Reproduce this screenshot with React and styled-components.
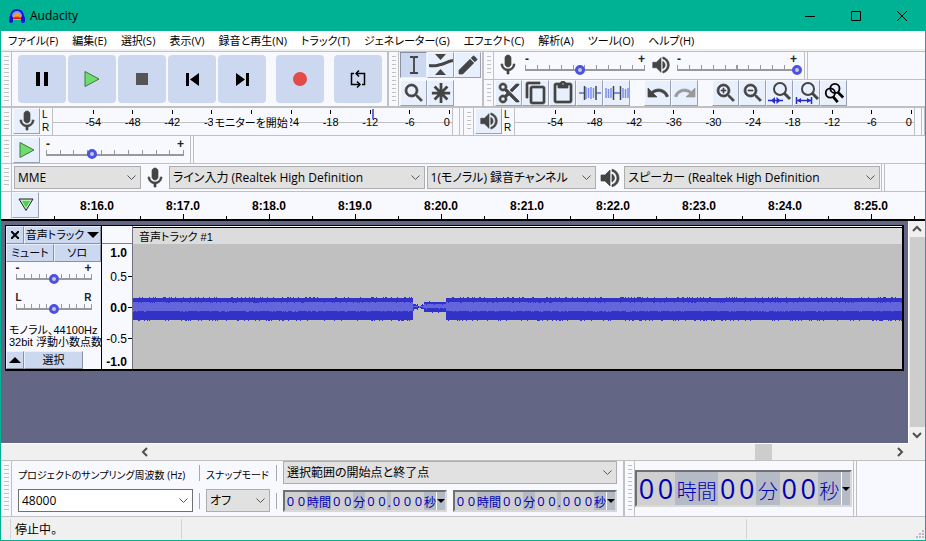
import React from 'react';
import styled, { createGlobalStyle } from 'styled-components';
import {
  MdContentCopy,
  MdContentCut,
  MdContentPaste,
  MdEdit,
  MdMic,
  MdRedo,
  MdSearch,
  MdUndo,
  MdVolumeUp,
  MdZoomIn,
  MdZoomOut,
} from 'react-icons/md';

const LINE = '#c0c0c0';
const PANEL = '#f8f9ff';
const BUTTON = '#ccd8f0';
const INK = '#444444';

const GlobalStyle = createGlobalStyle`
  * {
    box-sizing: border-box;
  }

  body {
    margin: 0;
    font-family: 'Open Sans', 'Noto Sans CJK JP', sans-serif;
    font-size: 12px;
    line-height: 16px;
    font-feature-settings: 'palt';
    color: #000;
  }

  button, input, select {
    margin: 0;
    padding: 0;
    border: 0;
    border-radius: 0;
    font: inherit;
    font-feature-settings: inherit;
    color: inherit;
  }

  svg {
    display: block;
    flex: none;
  }

  /* thicken the icon package's glyphs */
  svg[stroke-width='0'] path:not([fill='none']) {
    stroke-width: 0.7;
  }
`;

const Window = styled.div`
  display: flex;
  flex-direction: column;
  min-height: 100vh;
  border: 1px solid #00b294;
  background: ${PANEL};
`;

const TitleBar = styled.header`
  display: flex;
  align-items: center;
  height: 30px;
  padding-left: 8px;
  background: #00b294;
`;

const Title = styled.h1`
  flex: 1;
  margin: 0 0 0 5px;
  font-size: 12px;
  font-weight: 400;
`;

const CaptionButton = styled.button`
  display: flex;
  align-items: center;
  justify-content: center;
  width: 46px;
  height: 30px;
  background: none;
`;

const MenuBar = styled.nav`
  display: flex;
  gap: 14px;
  height: 20px;
  padding: 2px 7px 0;
  background: #fff;
  border-bottom: 2px solid #f0f0f0;
  font-size: 11px;
`;

const MenuLink = styled.a`
  color: #000;
  text-decoration: none;
  white-space: nowrap;
`;

const Dock = styled.div`
  display: flex;
  height: ${(p) => p.$height}px;
  border-top: ${(p) => p.$line || 1}px solid ${LINE};
`;

const Grabber = styled.div`
  flex: none;
  width: ${(p) => (p.$first ? 11 : 10)}px;
  padding: 4px 2px 4px 3px;
  border-right: 1px solid ${LINE};

  &::before {
    content: '';
    display: block;
    height: 100%;
    background: ${(p) => (p.$blank ? 'none' : `repeating-linear-gradient(${LINE} 0 1px, transparent 1px 4px)`)};
  }
`;

const Divider = styled.div`
  flex: none;
  width: ${(p) => p.$width || 4}px;
  border-left: 1px solid ${LINE};
  border-right: 1px solid ${LINE};
`;

const Transport = styled.div`
  display: flex;
  align-items: center;
  gap: 2px;
  padding: 0 5px 0 6px;
`;

const TransportButton = styled.button`
  display: flex;
  align-items: center;
  justify-content: center;
  width: 48px;
  height: 48px;
  margin-left: ${(p) => (p.$apart ? 8 : 0)}px;
  border-radius: 4px;
  background: ${BUTTON};
`;

const ToolGrid = styled.div`
  display: grid;
  grid-template-columns: repeat(3, 27px);
  grid-template-rows: 27px 26px;
  row-gap: 1px;
  padding: 0 1px;
`;

const ToolButton = styled.button`
  display: flex;
  flex: none;
  align-items: center;
  justify-content: center;
  width: 27px;
  height: 26px;
  color: ${(p) => (p.disabled ? '#999' : INK)};
  background: ${(p) => (p.$active ? BUTTON : '#e9f0fd')};
  border: 1px solid;
  border-color: ${(p) => (p.$active ? '#8890a4 #e9f0fd #e9f0fd #8890a4' : '#f8f9ff #9aa0b0 #9aa0b0 #f8f9ff')};
`;

const Stack = styled.div`
  display: flex;
  flex: 1;
  flex-direction: column;
  min-width: 0;
`;

const StackRow = styled.div`
  display: flex;
  flex: 1;
  align-items: stretch;

  & + & {
    border-top: 1px solid ${LINE};
  }
`;

const MixerGroup = styled.div`
  display: flex;
  align-items: center;
  gap: ${(p) => (p.$tight ? 1 : 0)}px;
  padding: 0 ${(p) => (p.$tight ? 1 : 2)}px;
  color: ${INK};
`;

const ButtonGroup = styled.div`
  display: flex;
  margin-right: 13px;
  padding-left: 1px;
`;

const SliderBox = styled.div`
  display: flex;
  flex: none;
  flex-direction: column;
  width: ${(p) => p.$width}px;
`;

const SliderEnds = styled.div`
  display: flex;
  justify-content: space-between;
  padding: 0 5px;
  font: 700 ${(p) => (p.$letters ? 10 : 12)}px/8px 'Liberation Sans', sans-serif;
  color: #222;
`;

const Range = styled.input`
  appearance: none;
  width: 100%;
  height: 12px;
  background:
    linear-gradient(#999, #999) center 6px / calc(100% - 10px) 2px no-repeat,
    repeating-linear-gradient(90deg, #999 0 1px, transparent 1px calc((100% - 1px) / 10)) center 2px / calc(100% - 10px) 4px no-repeat;

  &::-webkit-slider-thumb {
    appearance: none;
    width: 10px;
    height: 10px;
    border: 3px solid #4b53e6;
    border-radius: 50%;
    background: #c8c8d0;
    margin-top: 1px;
  }
`;

const MeterBox = styled.div`
  display: flex;
  flex: 1;
  align-items: stretch;
  min-width: 0;
  padding-left: 1px;
`;

const Channels = styled.div`
  display: flex;
  flex: none;
  flex-direction: column;
  width: 12px;
  padding-left: 2px;
  font: 10px/13px 'Liberation Sans', sans-serif;
`;

const MeterScale = styled.div`
  position: relative;
  display: flex;
  flex: 1;
  justify-content: space-between;
  margin-right: 6px;
  padding: 2px 2px 0 0;
  border-left: 1px solid ${LINE};
  border-right: 1px solid ${LINE};
  background: linear-gradient(${LINE}, ${LINE}) 0 14px / 100% 1px no-repeat;
`;

const MeterMark = styled.span`
  display: flex;
  flex-direction: column;
  align-items: ${(p) => (p.$last ? 'flex-end' : 'center')};
  width: 1px;
  font: 11px/16px 'Liberation Sans', sans-serif;

  &::before {
    content: '';
    width: 1px;
    height: 4px;
    background: ${(p) => (p.$first ? 'none' : '#000')};
  }
`;

const MeterHint = styled.span`
  position: absolute;
  top: 6px;
  left: 40%;
  padding: 0 2px;
  background: ${PANEL};
  font-size: 11px;
  line-height: 17px;
  white-space: nowrap;
`;

const Peak = styled.span`
  position: absolute;
  top: 1px;
  left: 80%;
  width: 2px;
  height: 10px;
  background: #6a6af0;
`;

const SelectBox = styled.div`
  display: flex;
  flex: 0 1 ${(p) => p.$width}px;
  min-width: 0;
  height: 23px;
  border: 1px solid ${(p) => (p.$white ? '#707070' : '#adadad')};
  background: ${(p) => (p.$white ? '#fff' : '#e1e1e1')};

  select, input {
    flex: 1;
    min-width: 0;
    width: 100%;
    padding-left: 3px;
    appearance: none;
    background: url("data:image/svg+xml,%3Csvg xmlns='http://www.w3.org/2000/svg' width='9' height='6'%3E%3Cpath d='M.5.5l4 4 4-4' fill='none' stroke='%23555'/%3E%3C/svg%3E") right 4px center no-repeat;
    outline: none;
  }
`;

const DeviceBar = styled.div`
  display: flex;
  flex: 0 1 869px;
  align-items: center;
  min-width: 0;
  padding: 0 1px 0 2px;
  gap: 2px;
  color: ${INK};

  select {
    color: #000;
  }
`;

const Timeline = styled.div`
  display: flex;
  height: 30px;
  border-top: 1px solid ${LINE};
  border-bottom: 2px solid #000;
`;

const Ruler = styled.div`
  display: flex;
  flex: 1;
  min-width: 0;
  margin-left: 15px;
  overflow: hidden;
`;

const Second = styled.div`
  display: flex;
  flex: none;
  flex-direction: column;
  align-items: center;
  justify-content: space-between;
  width: 86px;
  padding-top: 6px;
  font: bold 12px/16px 'Liberation Sans', sans-serif;
  background: linear-gradient(#000, #000) left bottom / 1px 3px no-repeat;

  &::after {
    content: '';
    width: 1px;
    height: 5px;
    background: #000;
  }
`;

const Workspace = styled.main`
  display: grid;
  flex: 1;
  grid-template-columns: 1fr 17px;
  grid-template-rows: 1fr 17px;
  background: #f0f0f0;
`;

const TrackList = styled.div`
  min-width: 0;
  padding: 4px 4px 0 4px;
  background: #646685;
`;

const Track = styled.section`
  display: flex;
  height: 146px;
  border: 1px solid #000;
  border-width: 1px 2px 2px 1px;
  background: ${PANEL};
`;

const TrackPanel = styled.div`
  position: relative;
  z-index: 1;
  display: flex;
  flex: none;
  flex-direction: column;
  width: 96px;
  border-right: 1px solid #000;
`;

const PanelRow = styled.div`
  display: flex;
  flex: none;
  height: 18px;
`;

const PanelButton = styled.button`
  display: flex;
  flex: ${(p) => (p.$width ? `0 0 ${p.$width}px` : '1')};
  align-items: center;
  justify-content: center;
  gap: 3px;
  min-width: 0;
  background: ${BUTTON};
  border: 1px solid;
  border-color: #e9f0fd #8890a4 #8890a4 #e9f0fd;
  font-size: 11px;
  line-height: 16px;
  white-space: nowrap;
`;

const PanelSliders = styled.div`
  display: flex;
  flex: 1;
  flex-direction: column;
  align-items: center;
  gap: 10px;
  padding-top: 2px;
`;

const TrackInfo = styled.p`
  flex: none;
  margin: 0;
  padding: 0 0 3px 3px;
  font: 11px/12px 'Liberation Sans', 'Noto Sans CJK JP', sans-serif;
  font-feature-settings: 'palt';
  white-space: nowrap;
`;

const LevelRuler = styled.div`
  display: grid;
  flex: none;
  grid-template-rows: 17px 31px 31px 31px 15px;
  width: 31px;
  padding-top: 18px;
  border-right: 1px solid #707080;
  background: linear-gradient(#808080, #808080) 0 17px / 100% 1px no-repeat;
`;

const Level = styled.span`
  display: flex;
  align-items: center;
  justify-content: flex-end;
  gap: 1px;
  font: ${(p) => (p.$bold ? '700' : '400')} 12px/16px 'Liberation Sans', sans-serif;

  &::after {
    content: '';
    width: 4px;
    height: 1px;
    background: ${(p) => (p.$tick ? '#000' : 'none')};
  }
`;

const Clip = styled.div`
  display: flex;
  flex: 1;
  flex-direction: column;
  min-width: 0;
  border-top: 1px solid #fff;
  background: #c0c0c0;
`;

const ClipTitle = styled.h2`
  height: 17px;
  margin: 0;
  padding-left: 6px;
  border-top: 1px solid #000;
  background: #dcdcdc;
  font: 400 11px/18px 'Liberation Sans', 'Noto Sans CJK JP', sans-serif;
  font-feature-settings: 'palt';
`;

const Wave = styled.svg`
  width: 100%;
  height: 125px;
`;

const ScrollBar = styled.div`
  display: flex;
  flex-direction: ${(p) => (p.$vertical ? 'column' : 'row')};
  padding-left: ${(p) => (p.$vertical ? 0 : 136)}px;
  background: #f0f0f0;
  border: 0 solid #fff;
  border-width: ${(p) => (p.$vertical ? '0 0 0 1px' : '1px 0 0')};
`;

const ScrollButton = styled.button`
  display: flex;
  flex: none;
  align-items: center;
  justify-content: center;
  width: 16px;
  height: 16px;
  background: none;
`;

const ScrollTrack = styled.div`
  display: flex;
  flex: 1;
  justify-content: flex-end;
  padding-right: ${(p) => p.$after || 0}px;
`;

const ScrollThumb = styled.div`
  width: ${(p) => p.$width}px;
  background: #cdcdcd;
`;

const SelectionGrid = styled.div`
  display: grid;
  grid-template-columns: 175px 1px 64px 1px 334px;
  grid-template-rows: 23px 23px;
  align-items: center;
  gap: 5px 6px;
  padding: 0 6px;
`;

const Bar = styled.div`
  height: 16px;
  background: #a8a8a8;
`;

const FieldLabel = styled.label`
  padding-top: 4px;
  font: 10px/16px 'Open Sans', 'Noto Sans CJK JP', sans-serif;
  font-feature-settings: 'palt';
  white-space: nowrap;
`;

const TimePair = styled.div`
  display: grid;
  grid-template-columns: 1fr 1fr;
  gap: 6px;
`;

const TimeBox = styled.div`
  display: flex;
  flex: none;
  align-self: center;
  height: ${(p) => (p.$large ? 37 : 22)}px;
  border: 2px solid;
  border-color: #707070 #d8d8d8 #d8d8d8 #707070;
  background: #b4bac6;
  color: #0000b4;
  font-size: ${(p) => (p.$large ? 27 : 13)}px;
`;

const Digit = styled.input`
  width: ${(p) => (p.$large ? 19 : 11)}px;
  text-align: center;
  background: #d0d0d0;
`;

const Unit = styled.span`
  display: flex;
  flex: 1 0 auto;
  align-items: center;
  justify-content: center;
  padding-top: ${(p) => (p.$large ? 4 : 2)}px;
  font-family: 'Noto Sans CJK JP', sans-serif;
  font-weight: ${(p) => (p.$large ? 300 : 400)};
  font-size: ${(p) => (p.$large ? 20 : 12)}px;
  line-height: 16px;
  font-feature-settings: normal;
`;

const TimeMenu = styled.button`
  display: flex;
  align-items: center;
  justify-content: center;
  width: 9px;
  border-left: 1px solid #fff;
  background: #b4bac6;
  color: #000;
`;

const AudioPosition = styled.div`
  display: flex;
  width: 217px;
  margin-right: 1px;

  ${TimeBox} {
    flex: 1;
  }
`;

const StatusBar = styled.footer`
  display: flex;
  height: 24px;
  padding-left: 9px;
  border-top: 1px solid ${LINE};
  background: #f0f0f0;
`;

const StatusCell = styled.div`
  flex: ${(p) => p.$flex};
  margin: 2px 0 1px;
  padding: 3px 4px;
  border-left: 1px solid #d4d4d4;
`;

const SizeGrip = styled.svg`
  margin-left: -10px;
`;

const Logo = () => (
  <svg width="16" height="16" viewBox="0 0 16 16">
    <path d="M2 10V8a6 6 0 0 1 12 0v2" fill="#7f9ff0" stroke="#1414d8" strokeWidth="2" />
    <path d="M4 12c0-4 2-7 4-7s4 3 4 7z" fill="#ff9a1e" />
    <path d="M4 10l1-1 1 1 1-2 1 2 1-2 1 2 1-1 1 1v1H4z" fill="#e01010" />
    <rect x="0" y="8" width="4" height="7" rx="2" fill="#1414d8" />
    <rect x="12" y="8" width="4" height="7" rx="2" fill="#1414d8" />
  </svg>
);

const Glyph = ({ size = 24, children }) => (
  <svg width={size} height={size} viewBox="0 0 24 24" fill="none" stroke="currentColor" strokeWidth="2">
    {children}
  </svg>
);

const PlayIcon = () => (
  <svg width="16" height="18" viewBox="0 0 16 18">
    <path d="M1 1.5v15L15 9z" fill="#6fdc6f" stroke="#3c7a3c" />
  </svg>
);

const LoopIcon = () => (
  <Glyph>
    <path d="M8 6.500H5.500v11H14M16 17.500h2.500v-11H10" strokeWidth="1.500" stroke="#000" />
    <path d="M11 14.500l3 3-3 3M13 3.500l-3 3 3 3" strokeWidth="1.500" stroke="#000" />
  </Glyph>
);

const IBeamIcon = () => (
  <Glyph>
    <path d="M8 4h3l1 1 1-1h3M8 20h3l1-1 1 1h3M12 5v14" strokeWidth="1.8" />
  </Glyph>
);

const EnvelopeIcon = () => (
  <Glyph>
    <path d="M0 12.500c6 1 7 0 12-1s6-3 12-4" strokeWidth="3" />
    <path d="M6 1h11l-5.500 6zM6 22h11l-5.500-6z" fill="currentColor" stroke="none" />
  </Glyph>
);

const MultiIcon = () => (
  <Glyph size={22}>
    <path d="M12 1v22M2 12h20M5 5l14 14M19 5L5 19" strokeWidth="3" />
  </Glyph>
);

const TrimIcon = () => (
  <Glyph>
    <path d="M1 12h5M18 12h5" stroke="#5b6fe0" strokeWidth="1.500" />
    <path d="M8 6v12M10.500 7v10M13 6v12M15.500 7v10" stroke="#7a8df0" strokeWidth="1.500" />
    <path d="M6.500 5v14M18 5v14" strokeWidth="1.500" />
  </Glyph>
);

const SilenceIcon = () => (
  <Glyph>
    <path d="M1 7v10M3.500 8v9M6 7v10M18 7v10M20.500 8v9M23 7v10" stroke="#7a8df0" strokeWidth="1.500" />
    <path d="M8 12h8" stroke="#5b6fe0" strokeWidth="1.500" />
    <path d="M8.500 5v14M15.500 5v14" strokeWidth="1.500" />
  </Glyph>
);

const FitSelectionIcon = () => (
  <Glyph>
    <circle cx="12" cy="8" r="6" />
    <path d="M16 12l6 6" strokeWidth="3" />
    <path d="M0 19.500h15" stroke="#2a2ac8" strokeWidth="1.500" />
    <path d="M7 16v7l-4-3.500zM8.500 16v7l4-3.500z" fill="#2a2ac8" stroke="none" />
  </Glyph>
);

const FitProjectIcon = () => (
  <Glyph>
    <circle cx="13" cy="8" r="6" />
    <path d="M17 12l6 6" strokeWidth="3" />
    <path d="M2 19.500h14M1.500 16v7M16.500 16v7" stroke="#2a2ac8" strokeWidth="1.500" />
    <path d="M6 17v5l-4-2.500zM12 17v5l4-2.500z" fill="#2a2ac8" stroke="none" />
  </Glyph>
);

const ZoomToggleIcon = () => (
  <Glyph size={22}>
    <g stroke="#000">
      <path d="M16 11l6 6M11 16l5 6" strokeWidth="3" />
      <circle cx="13" cy="7" r="5" fill="#e9f0fd" />
      <circle cx="8" cy="12" r="5" />
    </g>
  </Glyph>
);

const Triangle = ({ up, width = 12 }) => (
  <svg width={width} height={width / 2} viewBox="0 0 12 6">
    <path d={up ? 'M0 6h12L6 0z' : 'M0 0h12L6 6z'} />
  </svg>
);

const Chevron = ({ turn }) => (
  <svg width="10" height="10" viewBox="0 0 10 10">
    <path d="M1 7l4-4 4 4" fill="none" stroke="#505050" strokeWidth="2" transform={`rotate(${turn} 5 5)`} />
  </svg>
);

const menus = [
  'ファイル(F)', '編集(E)', '選択(S)', '表示(V)', '録音と再生(N)', 'トラック(T)',
  'ジェネレーター(G)', 'エフェクト(C)', '解析(A)', 'ツール(O)', 'ヘルプ(H)',
];

const playLevels = ['', -54, -48, -42, -36, -30, -24, -18, -12, -6, 0];

// -30 stays blank under the hint
const recordLevels = ['', -54, -48, -42, -36, '', -24, -18, -12, -6, 0];

const seconds = [16, 17, 18, 19, 20, 21, 22, 23, 24, 25];

// One column per pixel: a dark peak band with a lighter RMS band inside it
const buildWave = () => {
  let peak = '';
  let rms = '';
  let seed = 7;
  const jitter = () => {
    seed = (seed * 16807) % 2147483647;
    return seed % 5 === 0 ? 1 : 0;
  };
  for (let x = 0; x < 770; x += 1) {
    let band = [54, 76, 58, 67];
    if (x >= 280 && x < 291) {
      const pinch = Math.round(Math.abs(x - 286) / 4);
      band = [62 - pinch, 64 + pinch, 62, 63];
    } else if (x >= 291 && x < 313) {
      band = [58, 68, 60, 64];
    }
    const [top, bottom, rmsTop, rmsBottom] = band;
    peak += `M${x} ${top - jitter()}h1V${bottom + jitter()}h-1z`;
    rms += `M${x} ${rmsTop + jitter()}h1V${rmsBottom + jitter()}h-1z`;
  }
  return { peak, rms };
};

const wave = buildWave();

const Slider = ({ label, width, value, ends = ['-', '+'] }) => (
  <SliderBox $width={width}>
    <SliderEnds $letters={ends[0] === 'L'}>
      <span>{ends[0]}</span>
      <span>{ends[1]}</span>
    </SliderEnds>
    <Range type="range" aria-label={label} defaultValue={value} />
  </SliderBox>
);

const Select = ({ label, value, width }) => (
  <SelectBox $width={width}>
    <select aria-label={label} defaultValue={value}>
      <option>{value}</option>
    </select>
  </SelectBox>
);

const Meter = ({ label, icon, levels, hint }) => (
  <MeterBox>
    <ToolButton aria-label={label}>{icon}</ToolButton>
    <Channels>
      <span>L</span>
      <span>R</span>
    </Channels>
    <MeterScale>
      {levels.map((level, i) => (
        <MeterMark key={i} $first={i === 0} $last={i === 10}>{level}</MeterMark>
      ))}
      {hint && <Peak />}
      {hint && <MeterHint>{hint}</MeterHint>}
    </MeterScale>
  </MeterBox>
);

const TimeField = ({ label, parts, large }) => (
  <TimeBox role="group" aria-label={label} $large={large}>
    {parts.map(([digits, unit], i) => (
      <React.Fragment key={i}>
        {digits.split('').map((digit, n) => (
          <Digit key={n} $large={large} maxLength={1} defaultValue={digit} aria-label={`${label} ${unit}`} />
        ))}
        <Unit $large={large}>{unit}</Unit>
      </React.Fragment>
    ))}
    <TimeMenu aria-label={`${label} 形式`}><Triangle width={8} /></TimeMenu>
  </TimeBox>
);

const selectionTime = [['00', '時間'], ['00', '分'], ['00', '.'], ['000', '秒']];

const App = () => {
  return (
    <Window>
      <GlobalStyle />
      <TitleBar>
        <Logo />
        <Title>Audacity</Title>
        <CaptionButton aria-label="最小化">
          <svg width="10" height="10"><path d="M0 5.500h10" stroke="#000" /></svg>
        </CaptionButton>
        <CaptionButton aria-label="最大化">
          <svg width="10" height="10"><path d="M.5.5h9v9h-9z" fill="none" stroke="#000" /></svg>
        </CaptionButton>
        <CaptionButton aria-label="閉じる">
          <svg width="10" height="10"><path d="M0 0l10 10M10 0L0 10" stroke="#000" /></svg>
        </CaptionButton>
      </TitleBar>

      <MenuBar>
        {menus.map((menu) => <MenuLink href="#" key={menu}>{menu}</MenuLink>)}
      </MenuBar>

      <Dock $height={55}>
        <Grabber $first />
        <Transport>
          <TransportButton aria-label="一時停止">
            <svg width="12" height="14"><path d="M0 0h4v14H0zM8 0h4v14H8z" /></svg>
          </TransportButton>
          <TransportButton aria-label="再生"><PlayIcon /></TransportButton>
          <TransportButton aria-label="停止">
            <svg width="12" height="12"><path d="M0 0h12v12H0z" fill="#555" /></svg>
          </TransportButton>
          <TransportButton aria-label="先頭へ">
            <svg width="13" height="13"><path d="M0 0h3v13H0zM13 0v13L4 6.500z" /></svg>
          </TransportButton>
          <TransportButton aria-label="終端へ">
            <svg width="13" height="13"><path d="M10 0h3v13h-3zM0 0v13l9-6.500z" /></svg>
          </TransportButton>
          <TransportButton aria-label="録音" $apart>
            <svg width="14" height="14"><circle cx="7" cy="7" r="7" fill="#e34a4a" /></svg>
          </TransportButton>
          <TransportButton aria-label="ループ" $apart><LoopIcon /></TransportButton>
        </Transport>
        <Divider $width={2} />
        <Grabber />
        <ToolGrid>
          <ToolButton aria-label="選択ツール" $active><IBeamIcon /></ToolButton>
          <ToolButton aria-label="エンベロープツール"><EnvelopeIcon /></ToolButton>
          <ToolButton aria-label="描画ツール"><MdEdit size={24} /></ToolButton>
          <ToolButton aria-label="ズームツール"><MdSearch size={24} /></ToolButton>
          <ToolButton aria-label="マルチツール"><MultiIcon /></ToolButton>
        </ToolGrid>
        <Divider $width={1} />
        <Stack>
          <StackRow>
            <Grabber />
            <MixerGroup>
              <MdMic size={24} />
              <Slider label="録音音量" width={130} value={46} />
              <MdVolumeUp size={22} />
              <Slider label="再生音量" width={130} value={100} />
            </MixerGroup>
            <Divider />
          </StackRow>
          <StackRow>
            <Grabber />
            <ButtonGroup>
              <ToolButton aria-label="切り取り"><MdContentCut size={24} /></ToolButton>
              <ToolButton aria-label="コピー"><MdContentCopy size={24} /></ToolButton>
              <ToolButton aria-label="貼り付け"><MdContentPaste size={24} /></ToolButton>
              <ToolButton aria-label="トリム"><TrimIcon /></ToolButton>
              <ToolButton aria-label="無音化"><SilenceIcon /></ToolButton>
            </ButtonGroup>
            <ButtonGroup>
              <ToolButton aria-label="元に戻す"><MdUndo size={24} /></ToolButton>
              <ToolButton aria-label="やり直す" disabled><MdRedo size={24} /></ToolButton>
            </ButtonGroup>
            <ButtonGroup>
              <ToolButton aria-label="拡大"><MdZoomIn size={24} /></ToolButton>
              <ToolButton aria-label="縮小"><MdZoomOut size={24} /></ToolButton>
              <ToolButton aria-label="選択範囲に合わせる"><FitSelectionIcon /></ToolButton>
              <ToolButton aria-label="全体に合わせる"><FitProjectIcon /></ToolButton>
              <ToolButton aria-label="ズーム切り替え"><ZoomToggleIcon /></ToolButton>
            </ButtonGroup>
          </StackRow>
        </Stack>
      </Dock>

      <Dock $height={29} $line={2}>
        <Grabber $first />
        <Meter label="録音メーター" icon={<MdMic size={24} />} levels={recordLevels} hint="モニターを開始" />
        <Divider $width={5} />
        <Grabber />
        <Meter label="再生メーター" icon={<MdVolumeUp size={22} />} levels={playLevels} />
        <Divider />
      </Dock>

      <Dock $height={28}>
        <Grabber $first />
        <MixerGroup $tight>
          <ToolButton aria-label="指定速度で再生"><PlayIcon /></ToolButton>
          <Slider label="再生速度" width={148} value={33} />
        </MixerGroup>
        <Divider />
      </Dock>

      <Dock $height={28}>
        <Grabber $first />
        <DeviceBar>
          <Select label="オーディオホスト" value="MME" width={127} />
          <MdMic size={24} />
          <Select label="録音デバイス" value="ライン入力 (Realtek High Definition" width={256} />
          <Select label="録音チャンネル" value="1(モノラル) 録音チャンネル" width={170} />
          <MdVolumeUp size={24} />
          <Select label="再生デバイス" value="スピーカー (Realtek High Definition" width={256} />
        </DeviceBar>
        <Divider />
      </Dock>

      <Timeline>
        <Grabber $first $blank />
        <ToolButton aria-label="再生ヘッドを固定">
          <svg width="16" height="14" viewBox="0 0 16 14">
            <path d="M1 1h14L8 12.500z" fill="#b8f0b8" stroke="#222" />
            <path d="M4 3h8L8 9.500z" fill="#4cd04c" />
          </svg>
        </ToolButton>
        <Ruler>
          {seconds.map((s) => <Second key={s}>8:{s}.0</Second>)}
          <Second />
        </Ruler>
      </Timeline>

      <Workspace>
        <TrackList>
          <Track>
            <TrackPanel>
              <PanelRow>
                <PanelButton $width={18} aria-label="トラックを閉じる">
                  <svg width="8" height="8"><path d="M0 0l8 8M8 0L0 8" stroke="#000" strokeWidth="2" /></svg>
                </PanelButton>
                <PanelButton>音声トラック <Triangle /></PanelButton>
              </PanelRow>
              <PanelRow>
                <PanelButton>ミュート</PanelButton>
                <PanelButton>ソロ</PanelButton>
              </PanelRow>
              <PanelSliders>
                <Slider label="ゲイン" width={86} value={50} />
                <Slider label="パン" width={86} value={50} ends={['L', 'R']} />
              </PanelSliders>
              <TrackInfo>
                モノラル、44100Hz<br />
                32bit 浮動小数点数
              </TrackInfo>
              <PanelRow>
                <PanelButton $width={18} aria-label="折りたたむ"><Triangle up /></PanelButton>
                <PanelButton $width={59}>選択</PanelButton>
              </PanelRow>
            </TrackPanel>
            <LevelRuler>
              <Level $bold>1.0</Level>
              <Level $tick>0.5</Level>
              <Level $bold $tick>0.0</Level>
              <Level $tick>-0.5</Level>
              <Level $bold>-1.0</Level>
            </LevelRuler>
            <Clip>
              <ClipTitle>音声トラック #1</ClipTitle>
              <Wave viewBox="0 0 769 125" preserveAspectRatio="none" shapeRendering="crispEdges">
                <path d={wave.peak} fill="#3232c8" />
                <path d={wave.rms} fill="#6464dc" />
              </Wave>
            </Clip>
          </Track>
        </TrackList>
        <ScrollBar $vertical>
          <ScrollButton aria-label="上へ"><Chevron turn={0} /></ScrollButton>
          <ScrollTrack><ScrollThumb $width={15} /></ScrollTrack>
          <ScrollButton aria-label="下へ"><Chevron turn={180} /></ScrollButton>
        </ScrollBar>
        <ScrollBar>
          <ScrollButton aria-label="左へ"><Chevron turn={270} /></ScrollButton>
          <ScrollTrack $after={120}><ScrollThumb $width={17} /></ScrollTrack>
          <ScrollButton aria-label="右へ"><Chevron turn={90} /></ScrollButton>
        </ScrollBar>
      </Workspace>

      <Dock $height={56}>
        <Grabber $first />
        <SelectionGrid>
          <FieldLabel htmlFor="rate">プロジェクトのサンプリング周波数 (Hz)</FieldLabel>
          <Bar />
          <FieldLabel htmlFor="snap">スナップモード</FieldLabel>
          <Bar />
          <Select label="選択範囲の形式" value="選択範囲の開始点と終了点" />
          <SelectBox $white>
            <input id="rate" defaultValue="48000" />
          </SelectBox>
          <Bar />
          <SelectBox>
            <select id="snap" defaultValue="オフ"><option>オフ</option></select>
          </SelectBox>
          <Bar />
          <TimePair>
            <TimeField label="開始点" parts={selectionTime} />
            <TimeField label="終了点" parts={selectionTime} />
          </TimePair>
        </SelectionGrid>
        <Divider $width={1} />
        <Grabber />
        <AudioPosition>
          <TimeField large label="再生位置" parts={[['00', '時間'], ['00', '分'], ['00', '秒']]} />
        </AudioPosition>
        <Divider />
      </Dock>

      <StatusBar>
        <StatusCell $flex="0 0 171px">停止中。</StatusCell>
        <StatusCell $flex="1" />
        <StatusCell $flex="0 0 179px" />
        <SizeGrip width="10" height="23" viewBox="0 0 10 23">
          <path d="M7 13h2v2H7zM7 16h2v2H7zM7 19h2v2H7zM4 16h2v2H4zM4 19h2v2H4zM1 19h2v2H1z" fill="#bbb" />
        </SizeGrip>
      </StatusBar>
    </Window>
  );
};

export default App;
